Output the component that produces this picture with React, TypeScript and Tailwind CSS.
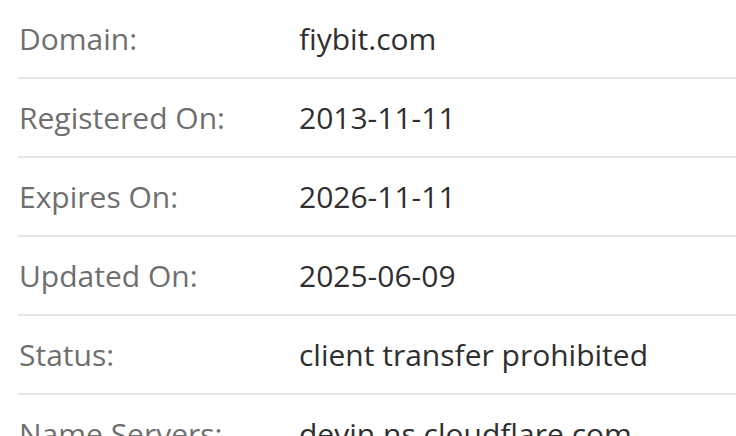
const rows = [
  { label: 'Domain:', value: 'fiybit.com' },
  { label: 'Registered On:', value: '2013-11-11' },
  { label: 'Expires On:', value: '2026-11-11' },
  { label: 'Updated On:', value: '2025-06-09' },
  { label: 'Status:', value: 'client transfer prohibited' },
  { label: 'Name Servers:', value: 'devin.ns.cloudflare.com' },
];

export default function App() {
  return (
    <div className="h-[436px] w-[736px] overflow-hidden bg-white pl-[18px] font-['Open_Sans',sans-serif]">
      {rows.map((row) => (
        <div
          key={row.label}
          className="flex h-[79px] items-center border-b-2 border-[#e6e6e6] text-[30px] leading-none"
        >
          <span className="w-[281px] shrink-0 pl-px text-[#6f6f6f]">{row.label}</span>
          <span className="text-[#2f2f2f]">{row.value}</span>
        </div>
      ))}
    </div>
  );
}
